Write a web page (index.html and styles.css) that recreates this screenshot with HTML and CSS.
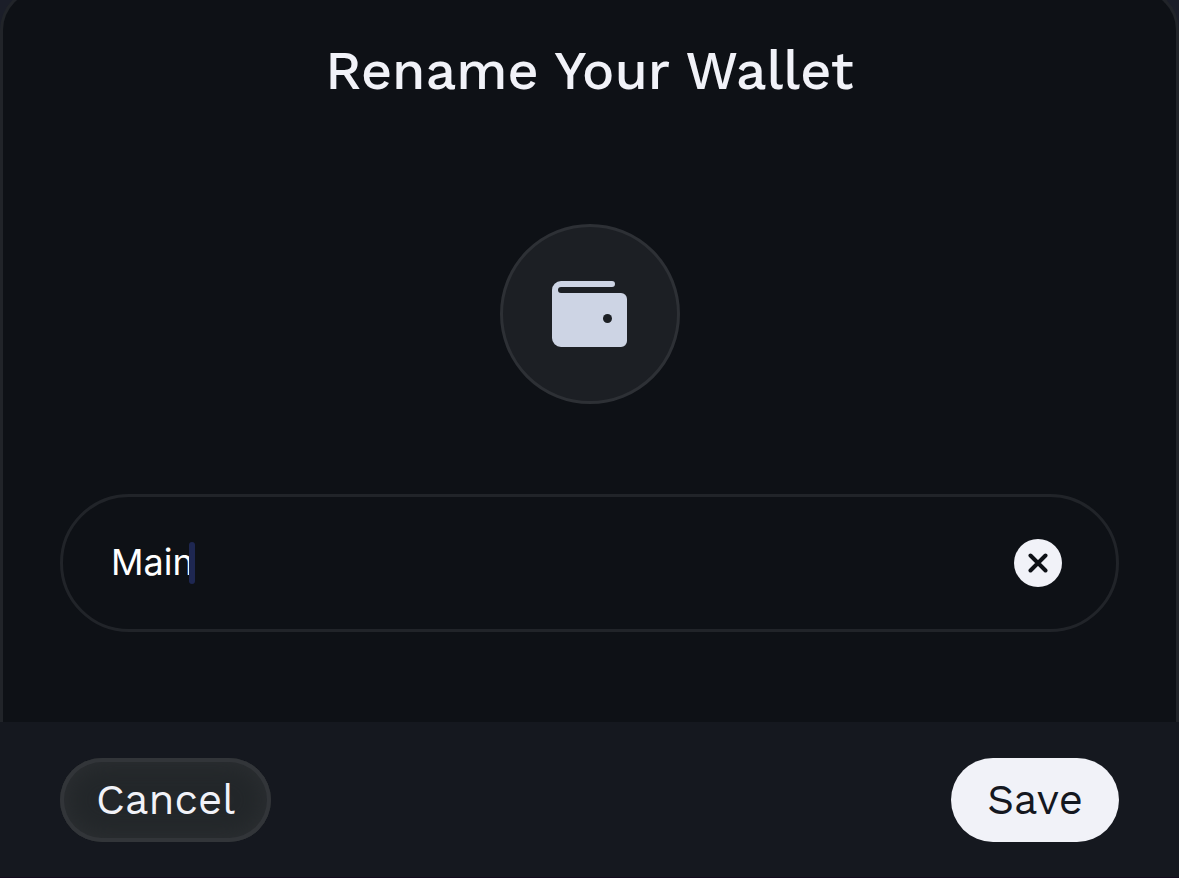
FILE: index.html
```html
<!DOCTYPE html>
<html lang="en">
<head>
    <meta charset="UTF-8">
    <meta name="viewport" content="width=device-width, initial-scale=1.0">
    <title>Rename Your Wallet</title>
    <link rel="stylesheet" href="styles.css">
</head>
<body>
<form class="dialog">
    <div class="panel">
        <h1 class="title">Rename Your Wallet</h1>
        <div class="avatar">
            <svg width="76" height="66" viewBox="0 0 76 66" aria-hidden="true">
                <path fill="#cdd4e4" d="M9 0H60a3 3 0 0 1 0 6H9a3 3 0 0 0 0 6H69a6 6 0 0 1 6 6V60a6 6 0 0 1-6 6H9a9 9 0 0 1-9-9V9a9 9 0 0 1 9-9z"/>
                <circle cx="55.5" cy="37.5" r="4.5" fill="#1c1f24"/>
            </svg>
        </div>
        <div class="field">
            <input class="name-input" id="walletName" type="text" value="Main" aria-label="Wallet name">
            <span class="caret"></span>
            <button class="clear" type="button" aria-label="Clear">
                <svg width="20" height="20" viewBox="0 0 20 20" aria-hidden="true">
                    <path d="M2.500 2.500L17.500 17.500M17.500 2.500L2.500 17.500" stroke="#0e1116" stroke-width="4" stroke-linecap="round"/>
                </svg>
            </button>
        </div>
    </div>
    <div class="footer">
        <button class="btn btn-cancel" type="button">Cancel</button>
        <button class="btn btn-save" type="submit">Save</button>
    </div>
</form>
</body>
</html>
```
FILE: styles.css
```css
* {
    box-sizing: border-box;
}
body {
    margin: 0;
    background-color: #1b1e29;
    color: #f1f2f8;
    font-family: "Work Sans", Inter, sans-serif;
}
.dialog {
    min-height: 100vh;
    display: flex;
    flex-direction: column;
    overflow: hidden;
}
.panel {
    flex: 1;
    display: flex;
    flex-direction: column;
    align-items: center;
    margin-top: -12px;
    padding: 50px 57px 0;
    background-color: #0e1116;
    border: 3px solid #212429;
    border-bottom: none;
    border-radius: 42px 42px 0 0;
}
.title {
    margin: 0 0 123px;
    font-size: 54px;
    line-height: 60px;
    font-weight: 500;
}
.avatar {
    width: 180px;
    height: 180px;
    display: flex;
    align-items: center;
    justify-content: center;
    margin-bottom: 90px;
    background-color: #1c1f24;
    border: 3px solid #2d3035;
    border-radius: 50%;
}
.field {
    width: 100%;
    height: 138px;
    display: flex;
    align-items: center;
    padding: 0 54px 0 48px;
    border: 3px solid #212429;
    border-radius: 69px;
}
.name-input {
    field-sizing: content;
    padding: 0 0 2px;
    border: none;
    outline: none;
    background: none;
    color: #fff;
    caret-color: transparent;
    font-family: Inter, sans-serif;
    font-size: 36px;
    line-height: 44px;
}
.caret {
    width: 6px;
    height: 42px;
    margin-left: -5px;
    background-color: #1e2751;
    border-radius: 3px;
}
.clear {
    width: 48px;
    height: 48px;
    display: flex;
    align-items: center;
    justify-content: center;
    margin-left: auto;
    padding: 0;
    border: none;
    border-radius: 50%;
    background-color: #f1f2f8;
    cursor: pointer;
}
.footer {
    display: flex;
    justify-content: space-between;
    padding: 36px 60px 35px;
    background-color: #15181f;
    border-bottom: 1px solid #150b1f;
}
.btn {
    height: 84px;
    padding: 0 36px 2px;
    border: none;
    border-radius: 42px;
    font-family: inherit;
    font-size: 42px;
    cursor: pointer;
}
.btn-cancel {
    background-color: #23272a;
    box-shadow: inset 0 0 0 4px #323539, inset 0 0 24px 4px #2d3033;
    color: #f1f2f8;
}
.btn-save {
    background-color: #f1f2f8;
    color: #15181f;
}
```
